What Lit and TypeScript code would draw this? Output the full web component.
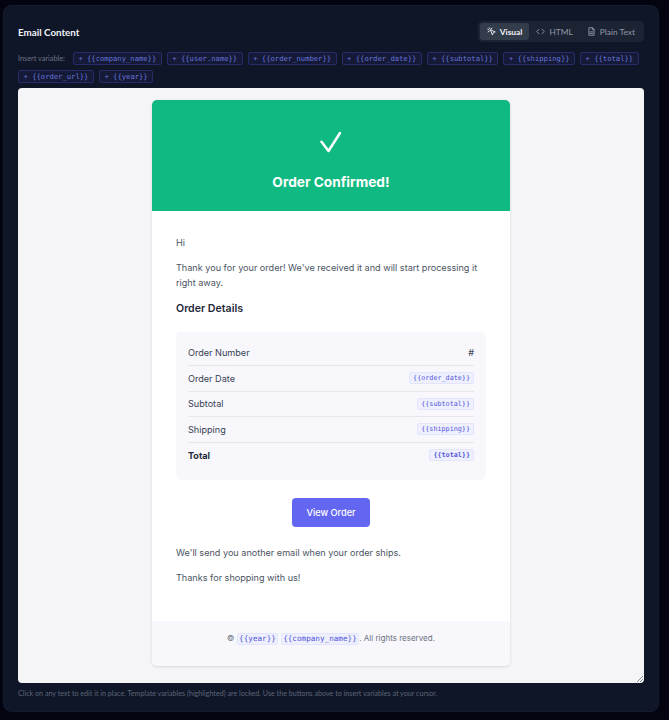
import { css, html, LitElement } from 'lit';
import { customElement } from 'lit/decorators.js';

const INSERTS = [
  '{{company_name}}',
  '{{user.name}}',
  '{{order_number}}',
  '{{order_date}}',
  '{{subtotal}}',
  '{{shipping}}',
  '{{total}}',
  '{{order_url}}',
  '{{year}}',
];

@customElement('app-root')
export class AppRoot extends LitElement {
  static override styles = css`
    :host {
      display: block;
      width: 669px;
      height: 720px;
      overflow: hidden;
      background: #03040f;
      font-family: Lato, 'Noto Sans', sans-serif;
    }
    .panel {
      box-sizing: border-box;
      width: 656px;
      height: 707px;
      margin: 5px 0 0 3px;
      padding: 15px 14px 0;
      background: #0f1628;
      border: 1px solid #141b2e;
      border-radius: 8px;
    }
    .top {
      display: flex;
      justify-content: space-between;
      align-items: center;
      height: 21px;
    }
    h2 {
      margin: 0;
      font-size: 9.8px;
      font-weight: 700;
      color: #f1f3f7;
    }
    .tabs {
      display: flex;
      padding: 2px;
      background: #1c2434;
      border-radius: 5px;
    }
    .tab {
      display: flex;
      align-items: center;
      gap: 4px;
      height: 17px;
      padding: 0 7px;
      font-size: 8.4px;
      color: #8f97a6;
      border-radius: 3px;
    }
    .tab.on {
      background: #333c4b;
      color: #eef0f4;
      font-weight: 700;
    }
    .tab svg {
      width: 9px;
      height: 9px;
      fill: none;
      stroke: currentColor;
      stroke-width: 1.2;
      stroke-linecap: round;
      stroke-linejoin: round;
    }
    .vars {
      display: flex;
      flex-wrap: wrap;
      align-items: center;
      gap: 5px;
      margin-top: 10px;
    }
    .vars-label {
      font-size: 7.3px;
      color: #6b7385;
      margin-right: 3px;
    }
    .ins {
      box-sizing: border-box;
      height: 13px;
      line-height: 11px;
      padding: 0 4.5px;
      font-family: 'DejaVu Sans Mono', monospace;
      font-size: 7.2px;
      color: #6a73d8;
      background: #141a38;
      border: 1px solid #252c66;
      border-radius: 2px;
      white-space: pre;
    }
    .editor {
      box-sizing: border-box;
      height: 595px;
      margin-top: 5px;
      padding-top: 12px;
      background: #f5f5f7;
      border-radius: 4px;
      position: relative;
    }
    .card {
      box-sizing: border-box;
      width: 358px;
      height: 566px;
      margin-left: 134px;
      display: flex;
      flex-direction: column;
      background: #fff;
      border-radius: 5px;
      overflow: hidden;
      box-shadow: 0 1px 3px rgba(0, 0, 0, 0.12);
      font-family: Inter, 'Liberation Sans', sans-serif;
    }
    .hero {
      height: 111px;
      flex: none;
      display: flex;
      flex-direction: column;
      align-items: center;
      background: #10b981;
      color: #fff;
    }
    .hero svg {
      width: 22px;
      height: 22px;
      margin-top: 31px;
      fill: none;
      stroke: #fff;
      stroke-width: 2.5;
      stroke-linecap: round;
      stroke-linejoin: round;
    }
    .hero h1 {
      margin: 19px 0 0;
      font-size: 13.7px;
      font-weight: 700;
      line-height: 20px;
    }
    .body {
      flex: 1;
      padding: 23.5px 24px 0;
      font-size: 9.1px;
      line-height: 15px;
      color: #4b5563;
    }
    .body p {
      margin: 0 0 10.5px;
    }
    .body h3 {
      margin: 0 0 15px;
      font-size: 10.6px;
      line-height: 16px;
      font-weight: 600;
      color: #1f2937;
    }
    .details {
      padding: 9px 12px 12px;
      background: #f8f8fc;
      border-radius: 5px;
      color: #374151;
    }
    .row {
      display: flex;
      justify-content: space-between;
      align-items: center;
      height: 25.5px;
      box-sizing: border-box;
      border-bottom: 1px solid #e5e7eb;
    }
    .row:last-child {
      border-bottom: none;
    }
    .row.total {
      font-weight: 700;
      color: #1f2937;
    }
    .var {
      display: inline-block;
      padding: 0 3px;
      line-height: 10px;
      font-family: 'DejaVu Sans Mono', monospace;
      font-size: 6.75px;
      font-weight: 400;
      color: #5356d8;
      background: #eef0fe;
      border: 1px solid #e2e5fb;
      border-radius: 2px;
    }
    .row.total .var {
      font-weight: 700;
    }
    .foot .var {
      padding: 0 1.5px;
      font-size: 7.65px;
    }
    .cta {
      display: block;
      width: 78px;
      height: 29px;
      line-height: 29px;
      margin: 18px auto 17.5px;
      text-align: center;
      font-size: 9.2px;
      font-weight: 500;
      color: #fff;
      background: #6366f1;
      border-radius: 4px;
    }
    .foot {
      flex: none;
      height: 45px;
      padding-top: 9px;
      box-sizing: border-box;
      text-align: center;
      font-size: 8px;
      line-height: 16px;
      color: #6b7280;
      background: #f8f8fc;
    }
    .grip {
      position: absolute;
      right: 1px;
      bottom: 1px;
      width: 6px;
      height: 6px;
      fill: none;
      stroke: #6b7280;
      stroke-width: 0.8;
    }
    .hint {
      margin: 6px 0 0;
      font-size: 7.15px;
      color: #5d6577;
    }
  `;

  override render() {
    return html`
      <div class="panel">
        <div class="top">
          <h2>Email Content</h2>
          <div class="tabs">
            <div class="tab on">
              <svg viewBox="0 0 12 12"><path d="M5 4l6 2.5-2.6 1-1 2.6zM1 3l1.5.8M3 1l.8 1.5M1.5 6.5L3 5.6M6.5 1.5L5.6 3"/></svg>
              Visual
            </div>
            <div class="tab">
              <svg viewBox="0 0 12 12"><path d="M4 3L1 6l3 3M8 3l3 3-3 3"/></svg>
              HTML
            </div>
            <div class="tab">
              <svg viewBox="0 0 12 12"><path d="M7 1H2.5v10h7V3.5zM7 1v2.5h2.5M4 6.5h4M4 8.5h4"/></svg>
              Plain Text
            </div>
          </div>
        </div>
        <div class="vars">
          <span class="vars-label">Insert variable:</span>
          ${INSERTS.map((v) => html`<span class="ins">+ ${v}</span>`)}
        </div>
        <div class="editor">
          <div class="card">
            <div class="hero">
              <svg viewBox="0 0 22 22"><path d="M1.5 10.7L8.5 20L20 2"/></svg>
              <h1>Order Confirmed!</h1>
            </div>
            <div class="body">
              <p>Hi</p>
              <p>Thank you for your order! We've received it and will start processing it right away.</p>
              <h3>Order Details</h3>
              <div class="details">
                <div class="row"><span>Order Number</span><span>#</span></div>
                <div class="row"><span>Order Date</span><span class="var">{{order_date}}</span></div>
                <div class="row"><span>Subtotal</span><span class="var">{{subtotal}}</span></div>
                <div class="row"><span>Shipping</span><span class="var">{{shipping}}</span></div>
                <div class="row total"><span>Total</span><span class="var">{{total}}</span></div>
              </div>
              <div class="cta">View Order</div>
              <p>We'll send you another email when your order ships.</p>
              <p>Thanks for shopping with us!</p>
            </div>
            <div class="foot">
              © <span class="var">{{year}}</span> <span class="var">{{company_name}}</span>. All rights reserved.
            </div>
          </div>
          <svg class="grip" viewBox="0 0 6 6"><path d="M0 6l6-6M3 6l3-3"/></svg>
        </div>
        <p class="hint">Click on any text to edit it in place. Template variables (highlighted) are locked. Use the buttons above to insert variables at your cursor.</p>
      </div>
    `;
  }
}
